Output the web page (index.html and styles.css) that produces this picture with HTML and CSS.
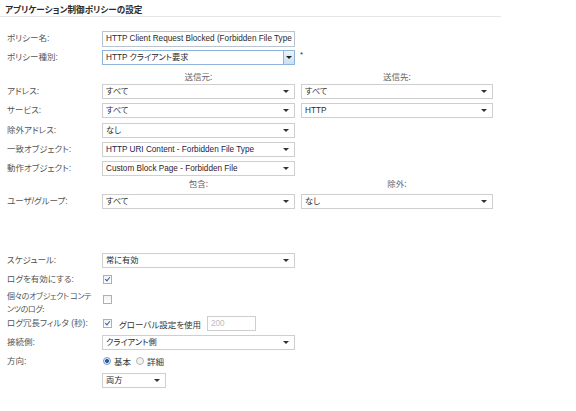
FILE: index.html
```html
<!DOCTYPE html>
<html lang="ja">
<head>
<meta charset="utf-8">
<link rel="stylesheet" href="styles.css">
</head>
<body>
<div class="page">
  <div class="title">アプリケーション制御ポリシーの設定</div>
  <div class="rows">
    <div class="row r1">
      <div class="lbl">ポリシー名:</div>
      <div class="inp f">HTTP Client Request Blocked (Forbidden File Type</div>
    </div>
    <div class="row">
      <div class="lbl">ポリシー種別:</div>
      <div class="sel f focus">HTTP クライアント要求<span class="btn"><span class="tri"></span></span></div>
      <span class="star">*</span>
    </div>
    <div class="hdr h1">
      <div class="hcell">送信元:</div>
      <div class="hcell h2c">送信先:</div>
    </div>
    <div class="row">
      <div class="lbl">アドレス:</div>
      <div class="sel f">すべて<span class="tri"></span></div>
      <div class="sel f2">すべて<span class="tri"></span></div>
    </div>
    <div class="row">
      <div class="lbl">サービス:</div>
      <div class="sel f">すべて<span class="tri"></span></div>
      <div class="sel f2">HTTP<span class="tri"></span></div>
    </div>
    <div class="row r20">
      <div class="lbl">除外アドレス:</div>
      <div class="sel f">なし<span class="tri"></span></div>
    </div>
    <div class="row">
      <div class="lbl">一致オブジェクト:</div>
      <div class="sel f navy">HTTP URI Content - Forbidden File Type<span class="tri"></span></div>
    </div>
    <div class="row">
      <div class="lbl">動作オブジェクト:</div>
      <div class="sel f maroon">Custom Block Page - Forbidden File<span class="tri"></span></div>
    </div>
    <div class="hdr h2">
      <div class="hcell">包含:</div>
      <div class="hcell h2c">除外:</div>
    </div>
    <div class="row">
      <div class="lbl">ユーザ/グループ:</div>
      <div class="sel f">すべて<span class="tri"></span></div>
      <div class="sel f2">なし<span class="tri"></span></div>
    </div>
    <div class="spacer"></div>
    <div class="row">
      <div class="lbl">スケジュール:</div>
      <div class="sel f">常に有効<span class="tri"></span></div>
    </div>
    <div class="row">
      <div class="lbl">ログを有効にする:</div>
      <span class="cb checked"></span>
    </div>
    <div class="row tall">
      <div class="lbl two">個々のオブジェクト コンテ<br>ンツのログ:</div>
      <span class="cb low"></span>
    </div>
    <div class="row">
      <div class="lbl">ログ冗長フィルタ (秒):</div>
      <span class="cb checked"></span>
      <span class="cbtext">グローバル設定を使用</span>
      <div class="inp small">200</div>
    </div>
    <div class="row">
      <div class="lbl">接続側:</div>
      <div class="sel f">クライアント側<span class="tri"></span></div>
    </div>
    <div class="row r18">
      <div class="lbl">方向:</div>
      <span class="radio on"></span><span class="rtext">基本</span>
      <span class="radio"></span><span class="rtext">詳細</span>
    </div>
    <div class="row r21">
      <div class="lbl"></div>
      <div class="sel short">両方<span class="tri"></span></div>
    </div>
  </div>
</div>
</body>
</html>
```
FILE: styles.css
```css
html, body {
  margin: 0;
  padding: 0;
  background: #fff;
}
body {
  font-family: "Liberation Sans", "Noto Sans CJK JP", sans-serif;
  font-size: 9px;
  color: #333;
  font-feature-settings: "palt";
}
.page {
  width: 501px;
  padding-top: 3px;
}
.title {
  font-family: "Noto Sans CJK JP", sans-serif;
  font-weight: bold;
  font-size: 8.6px;
  line-height: 13px;
  height: 13px;
  padding-left: 5px;
  color: #2a2a2a;
  border-bottom: 1px solid #e6e6e6;
}
.rows {
  padding-top: 12px;
  padding-left: 7px;
}
.row {
  display: flex;
  align-items: center;
  height: 19px;
}
.row.r20 { height: 20px; }
.row.r18 { height: 18px; }
.row.r21 { height: 21px; }
.row.tall {
  height: 25px;
  align-items: flex-start;
}
.lbl {
  width: 95px;
  flex: none;
  font-family: "Liberation Sans", "Noto Sans CJK JP", sans-serif;
  color: #555;
  font-size: 8.5px;
  line-height: 13px;
}
.lbl.two {
  font-family: "Noto Sans CJK JP", sans-serif;
  white-space: nowrap;
  font-size: 8px;
  letter-spacing: -0.4px;
  line-height: 13px;
  height: 26px;
}
.f { width: 193px; }
.f2 { width: 192px; margin-left: 6px; }
.short { width: 64px; }
.sel, .inp {
  box-sizing: border-box;
  height: 15px;
  border: 1px solid #cfcfcf;
  background: #fff;
  position: relative;
  padding-left: 3px;
  line-height: 13px;
  font-size: 8.2px;
  color: #2a2a2a;
  white-space: nowrap;
  overflow: hidden;
  flex: none;
}
.inp {
  height: 16px;
  line-height: 14px;
  border-color: #b9c4d0;
}
.sel.focus {
  border-color: #8fb4da;
}
.navy { color: #1c1c4c; }
.maroon { color: #3a2020; }
.tri {
  position: absolute;
  right: 5px;
  top: 5px;
  width: 0;
  height: 0;
  border-left: 3px solid transparent;
  border-right: 3px solid transparent;
  border-top: 3px solid #333;
}
.btn {
  position: absolute;
  right: 0;
  top: 0;
  width: 11px;
  height: 13px;
  box-sizing: border-box;
  border-left: 1px solid #8fb4da;
  background: linear-gradient(#eaf3fc, #c9dff3);
}
.btn .tri {
  right: 2px;
  top: 5px;
  border-top-color: #222;
}
.star {
  margin-left: 5px;
  margin-top: -6px;
  font-size: 8px;
  color: #333;
}
.hdr {
  display: flex;
  padding-left: 95px;
  font-family: "Noto Sans CJK JP", sans-serif;
  color: #666;
  font-size: 8.5px;
}
.h1 { height: 15px; line-height: 18px; }
.h2 { height: 14px; line-height: 11px; }
.hcell {
  width: 193px;
  text-align: center;
}
.h2c {
  width: 192px;
  margin-left: 6px;
}
.spacer { height: 40px; }
.cb {
  display: inline-block;
  box-sizing: border-box;
  width: 9px;
  height: 9px;
  border: 1px solid #b0b0b0;
  background: linear-gradient(#f2f2f2, #fdfdfd);
  margin-left: 1px;
  position: relative;
  flex: none;
}
.cb.low { margin-top: 6px; }
.cb.checked::after {
  content: "";
  position: absolute;
  left: 2px;
  top: 0px;
  width: 2px;
  height: 4px;
  border-right: 1.5px solid #3a5fb0;
  border-bottom: 1.5px solid #3a5fb0;
  transform: rotate(40deg);
}
.cbtext {
  margin-left: 7px;
  font-family: "Noto Sans CJK JP", sans-serif;
  color: #333;
  font-size: 8.5px;
  width: 88px;
}
.inp.small {
  width: 49px;
  height: 15px;
  line-height: 13px;
  color: #bbb;
  border-color: #cfcfcf;
}
.radio {
  display: inline-block;
  box-sizing: border-box;
  width: 8px;
  height: 8px;
  border-radius: 50%;
  border: 1px solid #b5b5b5;
  background: #f3f3f3;
  margin-left: 1px;
  position: relative;
  flex: none;
}
.radio.on {
  border-color: #7a9cc8;
  background: radial-gradient(circle, #1f5fb0 0 1.8px, #dfe9f5 2.2px);
}
.rtext {
  margin-left: 3px;
  margin-right: 4px;
  font-family: "Noto Sans CJK JP", sans-serif;
  color: #333;
  font-size: 8.5px;
}
```
